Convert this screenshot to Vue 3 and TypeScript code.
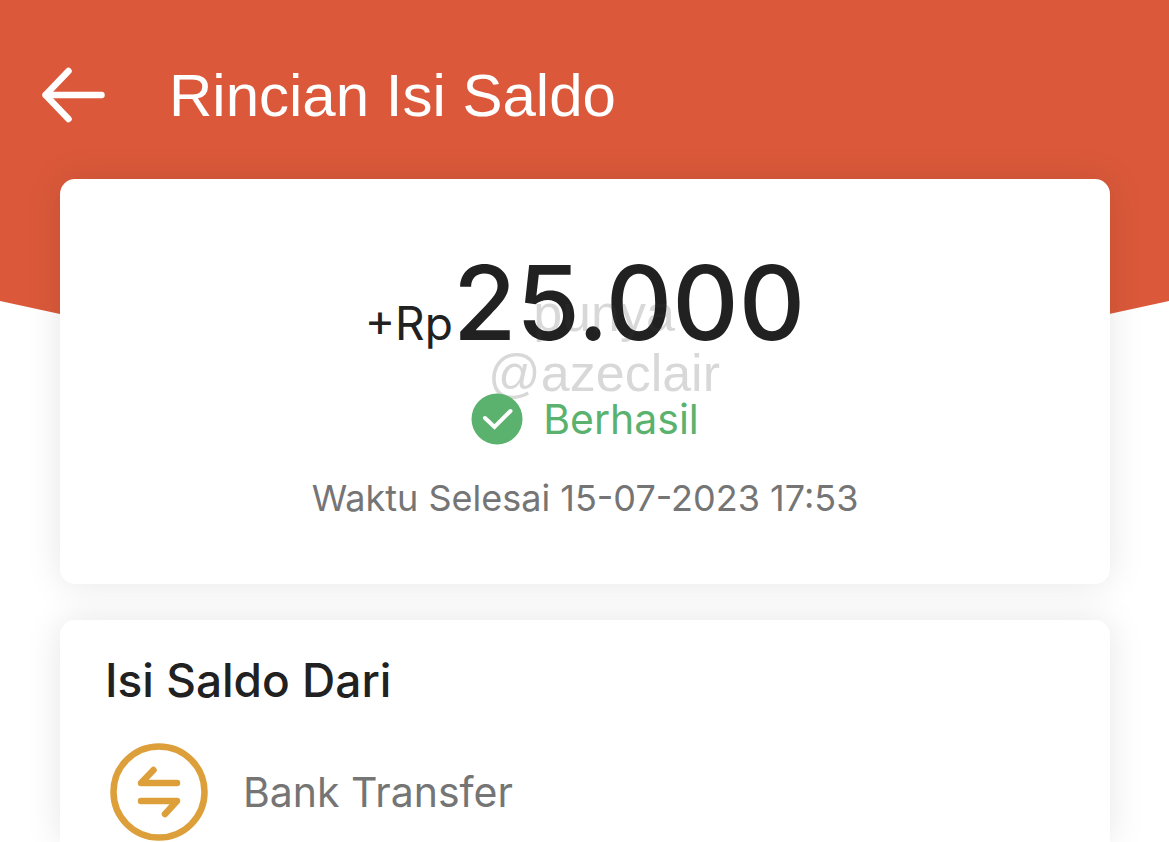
<script setup lang="ts">
interface TopUp {
  currency: string
  amount: string
  status: string
  finishedAt: string
  source: string
}

const topUp: TopUp = {
  currency: '+Rp',
  amount: '25.000',
  status: 'Berhasil',
  finishedAt: 'Waktu Selesai 15-07-2023 17:53',
  source: 'Bank Transfer',
}
</script>

<template>
  <div class="page">
    <div class="backdrop" aria-hidden="true"></div>
    <header class="bar">
      <button class="back" type="button" aria-label="Kembali">
        <svg viewBox="0 0 64 56" width="64" height="56" fill="none" stroke="#fff" stroke-width="6.500" stroke-linecap="round" stroke-linejoin="round">
          <path d="M60.500 28H4.500M27.500 4L4.500 28L27.500 52" />
        </svg>
      </button>
      <h1 class="title">Rincian Isi Saldo</h1>
    </header>
    <main class="content">
      <section class="card summary">
        <p class="amount">
          <span class="currency">{{ topUp.currency }}</span><span class="value">{{ topUp.amount }}</span>
        </p>
        <p class="status">
          <svg class="check" viewBox="0 0 52 52" width="52" height="52" aria-hidden="true">
            <circle cx="26" cy="26" r="25.500" fill="#5bb26e" />
            <path d="M14 25L23.500 34L39.500 18" fill="none" stroke="#fff" stroke-width="4" stroke-linecap="round" stroke-linejoin="miter" />
          </svg>
          <span>{{ topUp.status }}</span>
        </p>
        <p class="time">{{ topUp.finishedAt }}</p>
        <p class="watermark">punya<br />@azeclair</p>
      </section>
      <section class="card source">
        <h2 class="heading">Isi Saldo Dari</h2>
        <div class="method">
          <svg viewBox="0 0 98 98" width="98" height="98" fill="none" stroke="#dc9f3a" stroke-width="6.500" stroke-linecap="round" stroke-linejoin="round" aria-hidden="true">
            <circle cx="49" cy="49" r="45.500" />
            <path d="M67 40H31L43.500 27M31 58H67L55 71" />
          </svg>
          <span>{{ topUp.source }}</span>
        </div>
      </section>
    </main>
  </div>
</template>

<style>
body {
  margin: 0;
  background: #fff;
}
</style>

<style scoped>
.page {
  position: relative;
  min-height: 100vh;
  overflow: hidden;
  font-family: Inter, Roboto, sans-serif;
  color: #212121;
}

.backdrop {
  position: absolute;
  inset: 0 0 auto;
  height: 428px;
  background: #db593a;
  clip-path: polygon(0 0, 100% 0, 100% 301px, 50% 100%, 0 301px);
}

.bar {
  position: relative;
  display: flex;
  align-items: center;
  gap: 64px;
  padding: 59px 41px 48px;
}

.back {
  display: flex;
  padding: 0;
  border: 0;
  background: none;
}

.title {
  margin: 0;
  padding-top: 2px;
  font: 400 60px/70px "Liberation Sans", Arial, sans-serif;
  color: #fff;
}

.content {
  position: relative;
  display: flex;
  flex-direction: column;
  gap: 36px;
  padding: 0 59px 0 60px;
}

.card {
  border-radius: 15px;
  background: #fff;
  box-shadow: 0 0 36px rgba(0, 0, 0, 0.1);
}

.summary {
  position: relative;
  display: flex;
  flex-direction: column;
  align-items: center;
  padding: 62px 24px;
}

.amount,
.status,
.time,
.watermark {
  margin: 0;
}

.amount {
  display: flex;
  align-items: baseline;
  line-height: 124px;
}

.currency {
  font-size: 46px;
}

.value {
  font-size: 103px;
  font-weight: 500;
}

.status {
  position: relative;
  z-index: 1;
  display: flex;
  align-items: center;
  gap: 20px;
  margin-top: 8px;
  font-size: 41px;
  line-height: 52px;
  color: #5bb26e;
}

.time {
  margin-top: 29px;
  font-size: 36px;
  line-height: 48px;
  color: #757575;
}

.watermark {
  position: absolute;
  inset: 104px 0 auto 38px;
  font: 400 52px/60px "Liberation Sans", Arial, sans-serif;
  text-align: center;
  color: rgba(60, 60, 60, 0.2);
  pointer-events: none;
}

.source {
  border-radius: 15px 15px 0 0;
  padding: 30px 45px 2px;
}

.heading {
  margin: 0;
  font-size: 46px;
  font-weight: 500;
  line-height: 60px;
}

.method {
  display: flex;
  align-items: center;
  gap: 35px;
  margin-top: 33px;
  padding-left: 5px;
  font-size: 41px;
  color: #757575;
}
</style>
